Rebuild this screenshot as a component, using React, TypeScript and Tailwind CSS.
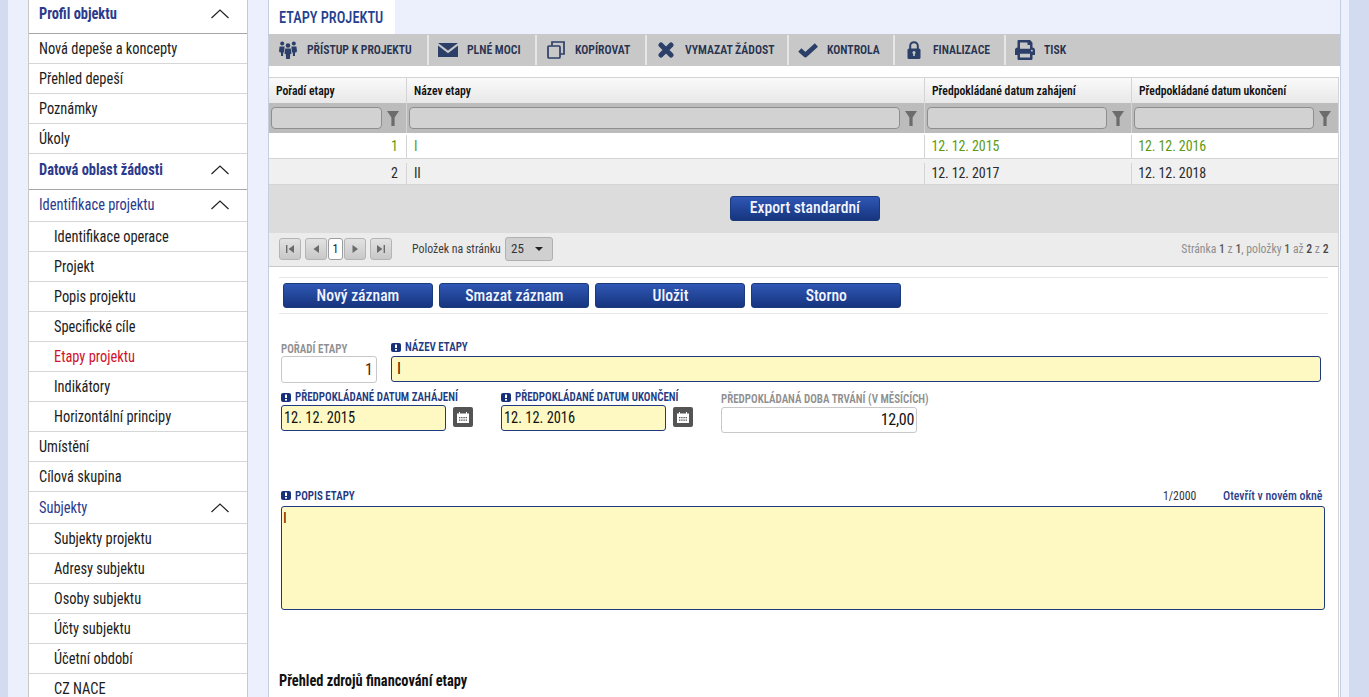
import { FaPrint } from 'react-icons/fa'

const FONT = "font-['Roboto_Condensed','Roboto','Liberation_Sans',sans-serif]"
const NAVY = '#2b3f68'

const TOP_ROWS = ['Nová depeše a koncepty', 'Přehled depeší', 'Poznámky', 'Úkoly']
const PROJECT_ROWS = ['Identifikace operace', 'Projekt', 'Popis projektu', 'Specifické cíle', 'Etapy projektu', 'Indikátory', 'Horizontální principy']
const SUBJECT_ROWS = ['Subjekty projektu', 'Adresy subjektu', 'Osoby subjektu', 'Účty subjektu', 'Účetní období', 'CZ NACE']

// The face in the picture is taller and narrower than Roboto Condensed
function Condensed({ children, className = '' }: { children: React.ReactNode; className?: string }) {
  return <span className={`inline-block origin-left whitespace-nowrap scale-x-[0.9] ${className}`}>{children}</span>
}

function Caret() {
  return (
    <svg width="18" height="10" viewBox="0 0 18 10" className="shrink-0">
      <path d="M0.5 9 L9 1 L17.5 9" fill="none" stroke="#222" strokeWidth="1.2" />
    </svg>
  )
}

function NavHeader({ label, h, bold }: { label: string; h: string; bold?: boolean }) {
  return (
    <div className={`${h} flex items-center justify-between pl-[10px] pr-[18px] ${bold ? 'border-b border-[#a6a6a6]' : 'border-b border-[#d6d6d6]'}`}>
      <Condensed className={`text-[16px] ${bold ? 'font-bold' : ''} text-[#2b3a8c]`}>{label}</Condensed>
      <Caret />
    </div>
  )
}

function NavRow({ label, sub, active }: { label: string; sub?: boolean; active?: boolean }) {
  return (
    <div className={`h-[30px] pt-[1px] flex items-center border-b border-[#d6d6d6] ${sub ? 'pl-[25px]' : 'pl-[10px]'}`}>
      <Condensed className={`text-[16px] ${active ? 'text-[#d0112b]' : 'text-[#1c1c1c]'}`}>{label}</Condensed>
    </div>
  )
}

function PeopleIcon() {
  return (
    <svg width="20" height="18" viewBox="0 0 20 18" fill={NAVY}>
      <circle cx="10" cy="4.5" r="2.3" />
      <path d="M7.2 7.6h5.6l.6 5.4h-1.2l-.3 5h-3.8l-.3-5H6.6z" />
      <circle cx="4.2" cy="2.6" r="2" />
      <path d="M1.6 5.4h5l-.5 6.2h-1v3.4H3v-3.4H1.8L1 10z" />
      <circle cx="15.8" cy="2.6" r="2" />
      <path d="M13.4 5.4h5l.6 4.6-.8 1.6H17V15h-2.1v-3.4h-1z" />
    </svg>
  )
}

function MailIcon() {
  return (
    <svg width="20" height="14" viewBox="0 0 20 14" fill={NAVY}>
      <path d="M0 0h20L10 7.5z" />
      <path d="M0 2.6l10 7.6 10-7.6V14H0z" />
    </svg>
  )
}

function CopyIcon() {
  return (
    <svg width="18" height="18" viewBox="0 0 18 18" fill="none" stroke={NAVY} strokeWidth="1.7">
      <rect x="1" y="5" width="12" height="12" rx="1" />
      <path d="M5 4.5V1h12v12h-3.5" />
    </svg>
  )
}

function CrossIcon() {
  return (
    <svg width="16" height="16" viewBox="0 0 16 16" fill="none" stroke={NAVY} strokeWidth="5" strokeLinecap="round">
      <path d="M3 3l10 10M13 3L3 13" />
    </svg>
  )
}

function CheckIcon() {
  return (
    <svg width="20" height="15" viewBox="0 0 20 15" fill="none" stroke={NAVY} strokeWidth="4.6" strokeLinejoin="round">
      <path d="M1.8 7l5.6 5L18.4 2" />
    </svg>
  )
}

function LockIcon() {
  return (
    <svg width="14" height="18" viewBox="0 0 14 18">
      <path d="M3.2 8V5a3.8 3.8 0 017.6 0v3" fill="none" stroke={NAVY} strokeWidth="2" />
      <rect x="0.5" y="7.5" width="13" height="10.5" rx="1.6" fill={NAVY} />
      <circle cx="7" cy="11.5" r="1.5" fill="#c8c8c8" />
      <rect x="6.2" y="11.5" width="1.6" height="3.5" fill="#c8c8c8" />
    </svg>
  )
}

function ToolButton({ icon, label, w, last }: { icon: React.ReactNode; label: string; w: string; last?: boolean }) {
  return (
    <div className={`${w} h-[30px] flex items-center ${last ? '' : 'border-r-2 border-[#e6e6e6]'}`}>
      <span className="w-[38px] flex justify-center shrink-0">{icon}</span>
      <Condensed className="text-[13px] font-semibold text-[#27324f]">{label}</Condensed>
    </div>
  )
}

function Funnel() {
  return (
    <svg width="12" height="15" viewBox="0 0 12 15" fill="#6c6c6c" className="shrink-0">
      <path d="M0 0h12L7.6 6.5V15H4.4V6.5z" />
    </svg>
  )
}

const COLS = ['w-[138px]', 'w-[519px]', 'w-[207px]', 'w-[206px]']

function HeaderRow() {
  const labels = ['Pořadí etapy', 'Název etapy', 'Předpokládané datum zahájení', 'Předpokládané datum ukončení']
  return (
    <div className="flex h-[26px] border-t border-[#d4d4d4] bg-gradient-to-b from-[#fafafa] to-[#e8e8e8]">
      {labels.map((l, i) => (
        <div key={l} className={`${COLS[i]} pl-[7px] pt-[1px] flex items-center ${i < 3 ? 'border-r border-[#d4d4d4]' : ''}`}>
          <Condensed className="text-[13px] font-semibold text-[#111]">{l}</Condensed>
        </div>
      ))}
    </div>
  )
}

function FilterRow() {
  return (
    <div className="flex h-[30px] bg-[#bcbcbc]">
      {COLS.map((c, i) => (
        <div key={i} className={`${c} flex items-center pl-[2px] pr-[7px] gap-[5px] ${i < 3 ? 'border-r border-[#d4d4d4]' : ''}`}>
          <div className="h-[22px] flex-1 rounded-[4px] bg-[#d2d2d2] border border-[#8e8e8e]" />
          <Funnel />
        </div>
      ))}
    </div>
  )
}

function DataRow({ cells, className }: { cells: string[]; className: string }) {
  return (
    <div className={`flex h-[26px] border-b border-[#d4d4d4] ${className}`}>
      {cells.map((c, i) => (
        <div key={i} className={`${COLS[i]} flex items-center ${i === 0 ? 'justify-end pr-[8px]' : i === 1 ? 'pl-[7px]' : 'pl-[6px]'} ${i < 3 ? 'border-r border-[#d4d4d4]' : ''}`}>
          <span className="text-[14px] tracking-[-0.1px] whitespace-nowrap">{c}</span>
        </div>
      ))}
    </div>
  )
}

function PagerButton({ children }: { children: React.ReactNode }) {
  return (
    <div className="w-[22px] h-[22px] rounded-[3px] border border-[#b4b4b4] bg-gradient-to-b from-[#e2e2e2] to-[#c8c8c8] flex items-center justify-center">
      <svg width="10" height="10" viewBox="0 0 10 10" fill="#6a6a6a">{children}</svg>
    </div>
  )
}

function BlueButton({ label, w }: { label: string; w: string }) {
  return (
    <div className={`${w} h-[25px] rounded-[3px] border border-[#1b3a7c] bg-gradient-to-b from-[#2f57b5] to-[#17357f] flex items-center justify-center`}>
      <span className="text-[17px] font-medium text-[#f2f5ff] scale-x-[0.92] whitespace-nowrap">{label}</span>
    </div>
  )
}

function Required() {
  return (
    <svg width="10" height="9" viewBox="0 0 10 9" className="shrink-0">
      <rect width="10" height="9" rx="2" fill="#17307a" />
      <rect x="4" y="1.5" width="2" height="3.5" fill="#fff" />
      <rect x="4" y="6" width="2" height="1.6" fill="#fff" />
    </svg>
  )
}

function FieldLabel({ label, required }: { label: string; required?: boolean }) {
  return (
    <div className="h-[14px] flex items-center gap-[4px]">
      {required && <Required />}
      <Condensed className={`text-[12.2px] font-semibold ${required ? 'text-[#23397f]' : 'text-[#8f8f8f]'}`}>{label}</Condensed>
    </div>
  )
}

function CalendarButton() {
  return (
    <div className="w-[20px] h-[20px] rounded-[2px] bg-[#545454] flex items-center justify-center">
      <svg width="12" height="11" viewBox="0 0 12 11" fill="#fff">
        <path d="M0 1.5h2V0h1v1.5h6V0h1v1.5h2V11H0z" />
        <path fill="#545454" d="M2 5h1.4v1.2H2zM4.2 5h1.4v1.2H4.2zM6.4 5h1.4v1.2H6.4zM8.6 5H10v1.2H8.6zM2 7.6h1.4v1.2H2zM4.2 7.6h1.4v1.2H4.2zM6.4 7.6h1.4v1.2H6.4zM8.6 7.6H10v1.2H8.6z" />
      </svg>
    </div>
  )
}

function DateField({ label, value }: { label: string; value: string }) {
  return (
    <div className="w-[220px]">
      <FieldLabel label={label} required />
      <div className="flex items-start gap-[7px] mt-[1px]">
        <div className="w-[165px] h-[26px] rounded-[3px] border border-[#1f3a7e] bg-[#fef9c3] pl-[2px] flex items-center text-[#111]">
          <Condensed className="text-[16px]">{value}</Condensed>
        </div>
        <div className="mt-[2px]"><CalendarButton /></div>
      </div>
    </div>
  )
}

export default function App() {
  return (
    <div className={`${FONT} w-[1369px] h-[697px] overflow-hidden flex bg-[#ebf0fc]`}>
      <div className="w-[8px] shrink-0 bg-[#d3dbf0]" />

      {/* Side menu */}
      <div className="ml-[20px] w-[220px] h-[697px] shrink-0 bg-white border-x border-[#c9c9c9] overflow-hidden">
        <NavHeader label="Profil objektu" h="h-[34px] pb-[5px]" bold />
        {TOP_ROWS.map(r => <NavRow key={r} label={r} />)}
        <NavHeader label="Datová oblast žádosti" h="h-[36px] pb-[3px]" bold />
        <NavHeader label="Identifikace projektu" h="h-[32px] pb-[1px]" />
        {PROJECT_ROWS.map(r => <NavRow key={r} label={r} sub active={r === 'Etapy projektu'} />)}
        <NavRow label="Umístění" />
        <NavRow label="Cílová skupina" />
        <NavHeader label="Subjekty" h="h-[32px]" />
        {SUBJECT_ROWS.map(r => <NavRow key={r} label={r} sub />)}
      </div>

      {/* Main column */}
      <div className="ml-[20px] w-[1072px] h-[697px] shrink-0 border-l border-[#c5cde0] overflow-hidden">
        <div className="w-[126px] h-[34px] bg-white flex items-center pl-[10px] pt-[1px]">
          <Condensed className="text-[16px] font-medium text-[#24408e]">ETAPY PROJEKTU</Condensed>
        </div>

        <div className="h-[697px] bg-white">
          <div className="h-[32px] w-[1071px] bg-[#c8c8c8] flex items-center">
            <ToolButton icon={<PeopleIcon />} label="PŘÍSTUP K PROJEKTU" w="w-[160px]" />
            <ToolButton icon={<MailIcon />} label="PLNÉ MOCI" w="w-[108px]" />
            <ToolButton icon={<CopyIcon />} label="KOPÍROVAT" w="w-[110px]" />
            <ToolButton icon={<CrossIcon />} label="VYMAZAT ŽÁDOST" w="w-[142px]" />
            <ToolButton icon={<CheckIcon />} label="KONTROLA" w="w-[106px]" />
            <ToolButton icon={<LockIcon />} label="FINALIZACE" w="w-[111px]" />
            <ToolButton icon={<FaPrint size={20} color={NAVY} />} label="TISK" w="w-[80px]" last />
          </div>

          <div className="w-[1070px] mt-[11px] border-r border-[#d4d4d4]">
            <HeaderRow />
            <FilterRow />
            <DataRow cells={['1', 'I', '12. 12. 2015', '12. 12. 2016']} className="bg-white text-[#5d9a12] pt-[2px]" />
            <DataRow cells={['2', 'II', '12. 12. 2017', '12. 12. 2018']} className="bg-[#f0f0f0] text-[#2b2b2b] pt-[4px]" />

            <div className="h-[48px] bg-[#dcdcdc] flex items-center justify-center pl-[2px] pb-[2px]">
              <BlueButton label="Export standardní" w="w-[150px]" />
            </div>

            <div className="h-[34px] bg-[#ececec] border-b border-[#c8c8c8] flex items-center pl-[10px] pr-[9px] pb-[2px]">
              <PagerButton><path d="M1 1h1.4v8H1zM9 1v8L3.6 5z" /></PagerButton>
              <div className="w-[4px]" />
              <PagerButton><path d="M8 1v8L2.5 5z" /></PagerButton>
              <div className="w-[15px] h-[22px] mx-[1px] rounded-[3px] border border-[#9c9c9c] bg-white text-[12px] text-[#222] flex items-center justify-center">1</div>
              <PagerButton><path d="M2.5 1v8L8 5z" /></PagerButton>
              <div className="w-[4px]" />
              <PagerButton><path d="M1 1v8l5.4-4zM7.6 1H9v8H7.6z" /></PagerButton>
              <Condensed className="ml-[20px] w-[93px] text-[13.2px] text-[#3d3d3d]">Položek na stránku</Condensed>
              <div className="w-[48px] h-[24px] rounded-[3px] border border-[#b0b0b0] bg-[#d0d0d0] flex items-center justify-between pl-[5px] pr-[9px] text-[13px] text-[#333]">
                25
                <span className="w-0 h-0 border-x-[4px] border-x-transparent border-t-[4px] border-t-[#222]" />
              </div>
              <div className="ml-auto origin-right scale-x-[0.9] text-[13px] text-[#8f8f8f] whitespace-nowrap">
                Stránka <b className="font-medium text-[#5a5a5a]">1</b> z <b className="font-medium text-[#5a5a5a]">1</b>, položky <b className="font-medium text-[#5a5a5a]">1</b> až <b className="font-medium text-[#444]">2</b> z <b className="font-medium text-[#444]">2</b>
              </div>
            </div>
          </div>

          {/* Detail form */}
          <div className="w-[1070px] border-r border-[#d4d4d4] h-[500px] pl-[10px] pr-[10px] pt-[10px]">
            <div className="border-y border-[#e6e6e6] h-[37px] flex items-center gap-[6px] pl-[4px]">
              <BlueButton label="Nový záznam" w="w-[150px]" />
              <BlueButton label="Smazat záznam" w="w-[150px]" />
              <BlueButton label="Uložit" w="w-[150px]" />
              <BlueButton label="Storno" w="w-[150px]" />
            </div>

            <div className="flex mt-[26px] pl-[2px]">
              <div className="w-[110px]">
                <div className="mt-[2px]"><FieldLabel label="POŘADÍ ETAPY" /></div>
                <div className="w-[96px] h-[27px] rounded-[3px] border border-[#c8c8c8] bg-white flex items-center justify-end pr-[3px] text-[16px] text-[#5a1a00]">1</div>
              </div>
              <div className="w-[930px]">
                <FieldLabel label="NÁZEV ETAPY" required />
                <div className="h-[26px] mt-[2px] rounded-[3px] border border-[#1f3a7e] bg-[#fef9c3] pl-[5px] flex items-center text-[16px] text-[#5a1a00]">I</div>
              </div>
            </div>

            <div className="flex mt-[7px] pl-[2px]">
              <DateField label="PŘEDPOKLÁDANÉ DATUM ZAHÁJENÍ" value="12. 12. 2015" />
              <DateField label="PŘEDPOKLÁDANÉ DATUM UKONČENÍ" value="12. 12. 2016" />
              <div className="mt-[2px]">
                <FieldLabel label="PŘEDPOKLÁDANÁ DOBA TRVÁNÍ (V MĚSÍCÍCH)" />
                <div className="w-[196px] h-[26px] mt-[1px] rounded-[3px] border border-[#c8c8c8] bg-white flex items-center justify-end pr-[2px] text-[16px] tracking-[-0.3px] text-[#111]">12,00</div>
              </div>
            </div>

            <div className="flex items-center mt-[53px] pl-[2px] w-[1044px]">
              <FieldLabel label="POPIS ETAPY" required />
              <Condensed className="ml-auto mr-[27px] w-[33px] text-[13px] text-[#333]">1/2000</Condensed>
              <Condensed className="w-[99px] mr-[1px] text-[13.2px] font-medium text-[#2b3f8c]">Otevřít v novém okně</Condensed>
            </div>
            <div className="ml-[2px] w-[1044px] h-[104px] rounded-[3px] border border-[#1f3a7e] bg-[#fef9c3] pl-[1px] text-[15px] text-[#5a1a00]">I</div>

            <div className="mt-[59px]">
              <Condensed className="text-[16px] font-bold text-[#111]">Přehled zdrojů financování etapy</Condensed>
            </div>
          </div>
        </div>
      </div>

      <div className="w-[9px] shrink-0 border-l border-[#c5cde0]" />
      <div className="flex-1 bg-[#d3dbf0]" />
    </div>
  )
}
